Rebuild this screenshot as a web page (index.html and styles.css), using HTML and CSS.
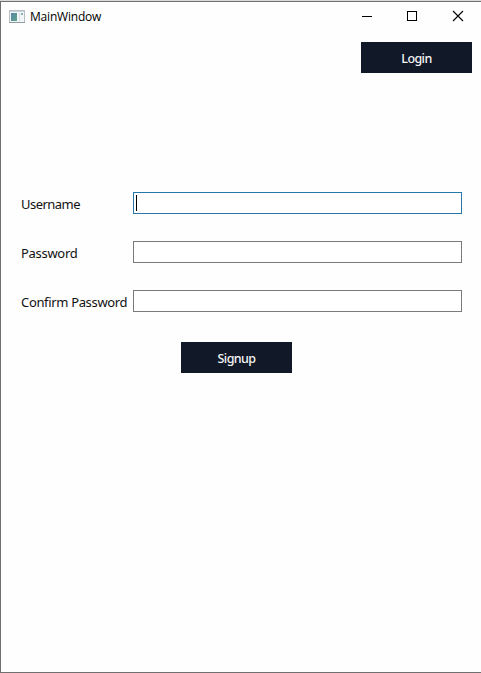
FILE: index.html
```html
<!DOCTYPE html>
<html lang="en">
<head>
<meta charset="utf-8">
<title>MainWindow</title>
<link rel="stylesheet" href="styles.css">
</head>
<body>
<div class="window">
  <header class="titlebar">
    <svg class="app-icon" width="16" height="14" viewBox="0 0 16 14" shape-rendering="crispEdges">
      <defs><linearGradient id="pane" x1="0" y1="0" x2="1" y2="1"><stop offset="0" stop-color="#5687a8"/><stop offset="1" stop-color="#5fa389"/></linearGradient></defs>
      <rect x=".5" y=".5" width="15" height="12" fill="#f3f6f7" stroke="#b9c0c4"/>
      <path d="M1 1.5h14" stroke="#c9d3da"/>
      <rect x="2" y="3" width="6" height="8" fill="url(#pane)"/>
      <path d="M10.5 3v8" stroke="#d5dde1"/>
      <rect x="12" y="3" width="2" height="2" fill="#94abbb"/>
      <path d="M0 12.5h16" stroke="#8f9a9f"/>
    </svg>
    <span class="title">MainWindow</span>
    <div class="controls">
      <svg width="46" height="30" viewBox="0 0 46 30" shape-rendering="crispEdges"><path d="M18 14.5h10" stroke="#000"/></svg>
      <svg width="46" height="30" viewBox="0 0 46 30" shape-rendering="crispEdges"><rect x="17.5" y="9.5" width="9" height="9" fill="none" stroke="#000"/></svg>
      <svg width="46" height="30" viewBox="0 0 46 30"><path d="M17 9l10 10M27 9l-10 10" stroke="#000" stroke-width="1.1"/></svg>
    </div>
  </header>
  <div class="toolbar"><button class="btn login">Login</button></div>
  <form class="form">
    <label class="label username"><span>Username</span></label>
    <div class="field focused"><i class="caret"></i></div>
    <label class="label password"><span>Password</span></label>
    <div class="field"></div>
    <label class="label"><span>Confirm Password</span></label>
    <div class="field"></div>
  </form>
  <div class="actions"><button class="btn" type="button">Signup</button></div>
</div>
</body>
</html>
```
FILE: styles.css
```css
* { box-sizing: border-box; }

body {
  margin: 0;
  background: #d9dbda;
  font-family: "Noto Sans", "Open Sans", sans-serif;
  color: #111;
}

.window {
  height: 672px;
  margin-top: 1px;
  border: solid #707070;
  border-width: 1px 0 1px 1px;
  background: #fefefe;
  overflow: hidden;
}

.titlebar {
  display: flex;
  align-items: center;
  height: 30px;
  padding-left: 8px;
}

.app-icon { margin: -1px 5px 0 0; }

.title {
  font-family: "Open Sans", sans-serif;
  font-size: 12px;
  line-height: 16px;
  letter-spacing: -0.2px;
  color: #000;
}

.controls {
  display: flex;
  margin: 0 -1px 0 auto;
}

.toolbar {
  display: flex;
  justify-content: flex-end;
  padding: 10px 9px 0 0;
}

.btn {
  width: 111px;
  height: 31px;
  padding: 2px 0 0;
  border: 0;
  background: #111827;
  color: #f5f5f5;
  font: 500 12.5px/18px "Noto Sans", sans-serif;
  letter-spacing: -0.6px;
}

.form {
  display: grid;
  grid-template-columns: 112px 329px;
  grid-auto-rows: 22px;
  row-gap: 27px;
  padding: 119px 0 0 20px;
}

.label {
  padding-top: 2px;
  font-size: 13px;
  line-height: 20px;
  letter-spacing: -0.34px;
  white-space: nowrap;
}

.username { letter-spacing: -0.53px; }
.password { letter-spacing: -0.3px; }

.field {
  border: 1px solid #7a7a7a;
  background: #fff;
}

.focused {
  padding: 2px;
  border-color: #2678a8;
}

.caret {
  display: block;
  width: 1px;
  height: 16px;
  background: #000;
}

.actions { padding: 30px 0 0 180px; }
```
